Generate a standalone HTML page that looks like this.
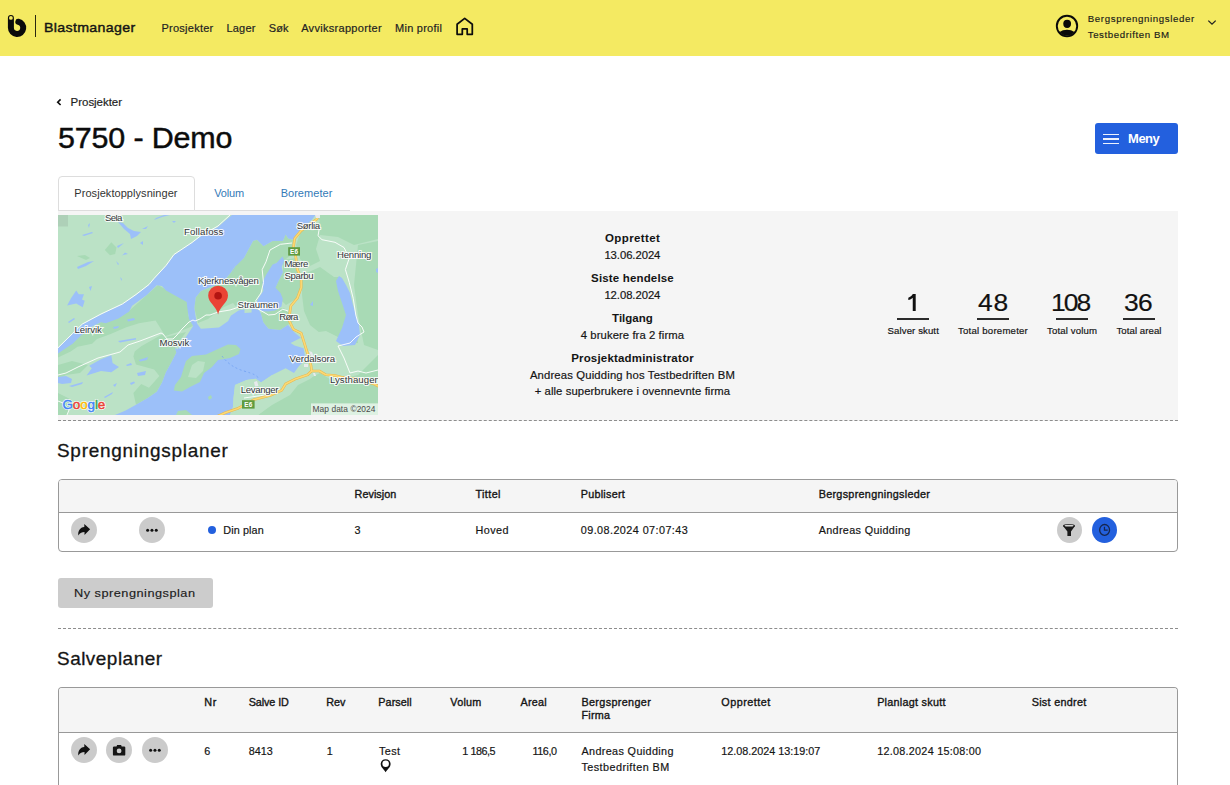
<!DOCTYPE html>
<html lang="no">
<head>
<meta charset="utf-8">
<title>Blastmanager - 5750 - Demo</title>
<style>
*{box-sizing:border-box;margin:0;padding:0}
html,body{width:1230px;height:785px;overflow:hidden;background:#fff}
body{font-family:"Liberation Sans",sans-serif;color:#1c1c1c;position:relative}
.abs,.t,svg.i{position:absolute}
.t{white-space:pre;line-height:1;display:block}
header{position:absolute;left:0;top:0;width:1230px;height:56px;background:#f4ea62}
.divider{left:34.7px;top:15px;width:1.4px;height:22px;background:#2a2810}
.menybtn{left:1095px;top:123px;width:83px;height:31px;background:#2360de;border-radius:3px}
.menybtn i{position:absolute;left:8px;width:16px;height:1.4px;background:#fff;opacity:.92}
.tabline{left:58px;top:210px;width:292px;height:1px;background:#ddd}
.tabactive{left:58px;top:176px;width:137px;height:35px;background:#fff;border:1px solid #ddd;border-radius:4px 4px 0 0}
.panel{left:58px;top:211px;width:1120px;height:210px;background:#f5f5f5}
.dash{left:58px;width:1120px;height:0;border-top:1px dashed #8d8d8d}
.uline{top:318px;width:32px;height:2px;background:#2b2b2b}
.tbl{left:58px;width:1120px;border:1px solid #999;border-radius:4px;background:#fff;overflow:hidden}
.tbl .th{position:absolute;left:0;top:0;width:100%;background:#f5f5f5;border-bottom:1px solid #999}
.cb{width:26px;height:26px;border-radius:50%;background:#cbcbcb}
.cb.blue{background:#2360de}
.cb svg{position:absolute;left:0;top:0;width:26px;height:26px}
.btn{left:58px;top:578px;width:155px;height:30px;background:#cccccc;border-radius:3px}
.maptext{left:58px;top:215px;width:320px;height:200px;overflow:hidden}
.t b{font-weight:400}
.dot{left:207.5px;top:526px;width:8px;height:8px;border-radius:50%;background:#2360de}
</style>
</head>
<body>
<header>
  <!-- logo -->
  <svg class="i" style="left:0;top:0" width="60" height="56" viewBox="0 0 60 56">
    <path d="M10.9 18 V27.8 A6.15 6.15 0 1 0 18.3 21.77" fill="none" stroke="#0b0b0b" stroke-width="6" stroke-linecap="round"/>
    <circle cx="10.9" cy="17.9" r="1.9" fill="#f4ea62"/>
  </svg>
  <div class="abs divider"></div>
  <!-- home icon -->
  <svg class="i" style="left:452px;top:12px" width="26" height="28" viewBox="452 12 26 28">
    <path d="M462.3 34.300 H457.100 V24.300 L464.700 18.400 L472.300 24.300 V34.300 H467.200 V28.900 H462.300 Z" fill="none" stroke="#0d0d0d" stroke-width="1.750" stroke-linejoin="round"/>
  </svg>
  <!-- user icon -->
  <svg class="i" style="left:1054px;top:13px" width="26" height="26" viewBox="1054 13 26 26">
    <defs><clipPath id="uc"><circle cx="1067" cy="26" r="9.6"/></clipPath></defs>
    <circle cx="1067" cy="26" r="10.2" fill="none" stroke="#0a0a0a" stroke-width="1.9"/>
    <ellipse cx="1067.15" cy="23.85" rx="3.9" ry="4.15" fill="#0a0a0a"/>
    <ellipse cx="1067" cy="37.4" rx="10.5" ry="7.6" fill="#0a0a0a" clip-path="url(#uc)"/>
  </svg>
  <!-- chevron -->
  <svg class="i" style="left:1204px;top:16px" width="16" height="14" viewBox="1204 16 16 14">
    <path d="M1208.3 20.6 L1212 24.2 L1215.7 20.6" fill="none" stroke="#222" stroke-width="1.3"/>
  </svg>
</header>

<!-- breadcrumb chevron -->
<svg class="i" style="left:54px;top:96px" width="10" height="12" viewBox="54 96 10 12">
  <path d="M60.6 99.4 L57.7 102.2 L60.6 105" fill="none" stroke="#111" stroke-width="1.6"/>
</svg>

<div class="abs menybtn"><i style="top:11px;height:1px"></i><i style="top:15.4px;height:1.3px"></i><i style="top:20.1px;height:1.2px"></i></div>

<div class="abs panel"></div>
<div class="abs tabline"></div>
<div class="abs tabactive"></div>

<svg class="i" style="left:58px;top:215px" width="320" height="200" viewBox="0 0 320 200">
<defs><clipPath id="mc"><rect width="320" height="200"/></clipPath></defs>
<g clip-path="url(#mc)">
<rect width="320" height="200" fill="#bbe2c6"/>
<!-- mid-green land patches -->
<g fill="#a8dab5">
  <path d="M0 0H10V11.500H0Z" fill="#aed0b8"/>
  <path d="M46.8 35L53.3 27.3L58.5 32.5L57.2 39L52 40.3Z"/>
  <path d="M19 41L27 40L32 43L28 45Z"/>
  <!-- band SE of Leirvik arm -->
  <path d="M88.8 80L100 70L130 87L130 100L135 111L120 117L107.3 121L97.6 105.4L81 108.3L68.3 112.2L52.7 119L39 123.9L34.1 128.8L19.5 131.7L12.7 136.6L0 142.4V138L22 121L43 107L60 103L71 96Z"/>
  <!-- Mosvik lower -->
  <path d="M76.7 136.4L83.2 131.2L104 119.5L108 122L128 117L117 132.5L118.3 137.7L113 148L108 157L104 167.6L98.800 176.7L89.700 183L78 189.700L75.400 178L83.200 169L91 172.800L101.400 161L96.200 154.600L78 149.400L75.400 141.600Z"/>
  <path d="M0 150L14 146L30 150L22 158L8 160L0 165Z"/>
  <path d="M0 178L12 184L10 200H0Z"/>
  <!-- pin peninsula + north -->
  <path d="M178 50L186 42.9L195.100 26L199 24.700L205.500 31.200L214.600 26L225 26L227.600 19.500L230.200 23.400L235 25L233 40L228 44L218 48L208 62L204 76L199 86L190 92L181 95L175 88L166 92L150 104L140 108L136.400 92.900L137.700 82.500L142.900 76L165 66.900L172.800 57.800Z"/>
  <!-- top right -->
  <path d="M257.5 0H320V24L296 30L280 22L262 20L258 12L262 6Z"/>
  <path d="M243 16L256 8L262 20L258 34L262 46L250 52L242 44L238 30Z"/>
  <!-- east of E6 -->
  <path d="M244 60L262 52L276 62L282 62L290 80L296 100L300 128L270 130L262 118L252 110L246 96L244 80Z"/>
  <path d="M300 30L320 26V135L306 130L300 100L296 70Z"/>
  <!-- Røra blob -->
  <path d="M202.700 98.100L210 95L226 93L232 100L236 106L230 109.800L222.200 115L210.500 113.700L205.300 107.200Z"/>
  <path d="M225 45L238 43L242 62L243 74L238 84L228 90L222 84L217 73L221 65L225 57Z"/>
  <!-- bottom right -->
  <path d="M320 140V200H200L215 188L226 178L232 170L250 164L262 158L275 166L300 160Z"/>
  <path d="M162 200L176 196L196 187L212 183L224 176L230 166L250 160L254 150L262 156L252 164L240 170L232 180L214 190L200 200Z" fill="#bbe2c6"/>
  <path d="M254 118L268 116L280 122L296 132L290 150L278 158L262 156L254 150L250 139Z" fill="#bbe2c6"/>
</g>
<!-- water -->
<g fill="#9cc0f9">
  <!-- NW arm -->
  <path d="M174 0L168 5L160 12L143 21L134 28L116 40L108 51L96 64L91 70L78 80L64.400 89.300L43 99.500L24.400 109.300L14.600 119L0 133.200V138.500L5.900 134.600L14.600 128.800L22.400 121L35 111L43 107.300L47.800 108.300L60.500 103.400L71.200 96.600L74.100 90.700L88.800 80L98.800 70.200L104 70.900L108 75.400L117 80.600L128.700 87.100L129.400 93.600L131 104L134 109L135.100 111.100L128 122L119.500 134.500L117 132.500L118.300 137.700L113 148L108 157L104 167.600L98.800 176.700L89.700 183L78 189.700L67.600 195.600L57 200H172L175 192L175.5 183L177 170L188.6 165L197.7 163.7L203 167.6L214.6 159.8L227.6 153.3L236 158L241 151L246 146L247 141L245.600 133.200L236.500 130.600L232.600 128L243 122.800L236.500 117.600L230 109.800L222.200 115L210.500 113.700L205.300 107.200L202.700 98.100L200.800 94.900L193.600 93L193.600 97.500L186.500 98L186.500 94.200L180.600 95.500L172.800 100.700L170.200 106L161 112.400L142.900 113.700L139 108.500L137.700 102L136.400 92.900L137.700 82.500L142.900 76L165 66.900L172.800 57.800L178 50L173 62.400L176.900 52L186 42.900L195.100 26L199 24.700L205.500 31.200L214.600 26L225 26L227.600 19.500L230.200 23.400L235.400 24.700L238 19.500L243.200 14.300L253.600 5.200L257.500 0Z"/>
  <!-- Borgenfjorden -->
  <path d="M224.500 41.600L226.300 45.500L223.700 52L225 57.200L221 65L217.500 72.800L222.500 78L224.800 83.800L223.500 91.500L217 95.500L210 96.500L203 96L200.800 94.900L198.800 87.700L200 83.800L205.300 76L204.500 66.900L208 60L214.600 49.400L218.500 48Z"/>
  <!-- Leksdalsvatnet -->
  <path d="M281 61L284 63L288 70L292 78L295 90L298 100L301 110L302 120L297 130L285 131L278 126L284 113L288 100L284 88L280 76L278 66Z"/>
  <!-- lakes TL -->
  <path d="M18.200 75.400L20.800 79.300L26 79.300L24 84.500L26.700 85.800L24.700 92.300L18.200 88.400L9.100 90.400L13 83.200Z"/>
  <path d="M60 7L65 8L70 13L76 16L83 17L79 21L73 24L72 19L66 14Z"/>
  <path d="M96 5L104 2L112 0H106L98 3Z"/>
  <path d="M19 52L30 47L36 46L28 51L20 54Z"/>
  <path d="M24 20L34 17L35 18L26 21Z"/>
  <path d="M59 31L66 28L60 33Z"/><path d="M63.500 41L67 37.500L70 39L65 40Z"/><path d="M82 28L85 26L85 30Z"/>
  <path d="M30 10L32 8L31 13Z"/><path d="M58 46L61 49L60 50Z"/><path d="M62 62L64 64L63.500 66Z"/><path d="M31 72L34 71L32.500 76Z"/>
  <path d="M84 14L90 11L88 14Z"/><path d="M114 6L118 6L116 8Z"/>
  <!-- lakes BL -->
  <path d="M53.300 140.300L54.600 148L61 152L53.300 157.200L43 156L28.600 160.500L33.800 153.300L31.200 150.700L43 144.200Z"/>
  <path d="M0 162L8 161L14 164L13 168L4 169L0 168Z"/>
  <path d="M11 171L25 167L24 169L14 172Z"/>
  <path d="M10 107L16 103L17 104L11 108Z"/><path d="M69 104.500L76 103L77 105L70 106.500Z"/><path d="M55 112L61 111L60 113L56 114Z"/>
  <path d="M81 145L90 142L89 145L82 146.500Z"/><path d="M79 158L88 156L87 160L80 161Z"/><path d="M68 150L73 148L74 150L69 151Z"/>
  <path d="M60 126L78 123L78 124.500L62 127.500Z"/><path d="M55 170L59 168L57 172Z"/><path d="M46 182L55 177L54 179L47 183Z"/><path d="M72 168L76 166.500L77 168L73 170Z"/>
  <!-- right lakes -->
  <path d="M318 54L320 53V58L318 57Z"/><path d="M252 90L255 86L255 91Z"/>
</g>
<!-- islands in water -->
<g fill="#a8dab5">
  <path d="M115.800 175.500L117 170L123 162L126 152L128 146L134 141L148 139.500L160 134L170 129.500L178 130L182.500 134L181 139L172 143L160 145L154 152L146 158L142 167L132 172L124 176.500Z"/>
  <path d="M130 162L134 150L140 146L147 147L145 156L138 163Z" fill="#bbe2c6"/>
  <path d="M150 182L153 180L154 183L151 185Z"/>
  <path d="M120 196L128 195L134 200H118Z"/>
  <path d="M172 200L175 192L175.5 183L177 170L188.6 165L197.7 163.7L203 167.6L214 160L222 162L212 172L205 180L196 184L184 190L176 200Z" fill="#bbe2c6"/>
</g>
<!-- ferry dashed -->
<path d="M164 141Q172 152 186 156T200 163" fill="none" stroke="#6f9ff2" stroke-width=".8" stroke-dasharray="2 2.500"/>
<!-- white roads -->
<g fill="none" stroke="#fff" stroke-width="1" stroke-opacity=".9" stroke-linejoin="round">
  <path d="M172 0L160 11L143 20.500L134 27.500L116 39.500L108 50.500L96 63.500L91 69.500L78 79.500L64.400 89L43 99L24.400 109L14.600 118.500L0 132.800"/>
  <path d="M0 160L8 158L20 152L40 143L62 137L70 130L82 126L103 118L105 119L109 124L115 124L119 120L124 114L131 107L135 105L137 106L142 104L148 100L152 100L160 97L172 95L178 93L184 91L197 92L201 94.500L210.500 100L217 99.400L224.800 94.200L230 96"/>
  <path d="M201.600 95L197.700 85.800L203 78L205.500 67.600L204.200 54.600L208 46.800L212 35L222.400 29.300L234 28"/>
  <path d="M261.400 13L260 20.800L264 24.700L277 27.300L286 32.500L291.300 43L287.400 54.600L291.300 67.600L295.200 83.200L297.800 100L300 108L304 112L306 117L298 122L292 128L280 131L286 143L292 158L300 156L308 158L320 155"/>
  <path d="M0 186L5 188L11 195L9 200"/>
  <path d="M186 183L200 181L214 179"/>
</g>
<!-- E6 -->
<g fill="none" stroke-linejoin="round" stroke-linecap="round">
  <path id="e6" d="M260 0L259 4L243.200 15.600L236.700 23.400L235.400 32.500L238 43L239.300 54.600L243.200 62.400L243.200 72.800L239.300 83.200L232.800 91L231.500 100L231 105.200L235.400 114.300L243.200 118.200L246.500 128.600L249.700 139L253 150.700L253.600 156L249.700 159.800L238 163.700L227.600 169L223.700 175.400L212 180.600L196.400 184.500L179.500 193.600L167.800 197.500L160 201" stroke="#e9b94e" stroke-width="2.600"/>
  <path d="M253.600 156L261.400 156L268 159.800L277 160.500L284.800 162.400L300 164L316 169L322 172" stroke="#e9b94e" stroke-width="2.600"/>
  <path d="M260 0L259 4L243.200 15.600L236.700 23.400L235.400 32.500L238 43L239.300 54.600L243.200 62.400L243.200 72.800L239.300 83.200L232.800 91L231.500 100L231 105.200L235.400 114.300L243.200 118.200L246.500 128.600L249.700 139L253 150.700L253.600 156L249.700 159.800L238 163.700L227.600 169L223.700 175.400L212 180.600L196.400 184.500L179.500 193.600L167.800 197.500L160 201" stroke="#fbd976" stroke-width="1.500"/>
  <path d="M253.600 156L261.400 156L268 159.800L277 160.500L284.800 162.400L300 164L316 169L322 172" stroke="#fbd976" stroke-width="1.500"/>
</g>
<!-- E6 shields -->
<g font-family="Liberation Sans, sans-serif" font-weight="700" font-size="6.500" fill="#fff" text-anchor="middle">
  <rect x="230.200" y="32.200" width="11.800" height="8.400" fill="#5f9b3f"/><text x="236.100" y="38.800">E6</text>
  <rect x="184" y="185.200" width="12.600" height="8.400" fill="#5f9b3f"/><text x="190.300" y="191.800">E6</text>
</g>
<!-- urban specks -->
<g fill="#e8eaed"><path d="M251 136L254 137L256 142L253 141Z"/><path d="M246 149L250 149L250 152L246 152Z"/><path d="M255 158L257 158L258 161L256 161Z"/><path d="M257 0H262V3H258Z"/><path d="M196 167L199 166L200.500 171L197 171.500Z"/></g>
<!--LABELS-->
<!-- Map data box -->
<rect x="253" y="188.400" width="67" height="11.600" fill="#fff" fill-opacity=".62"/>
</g>
</svg>

<div class="abs maptext"><span class="t h" aria-hidden="true" style="left:46.92px;top:-2.00px;font-size:9.6px;color:#33373a;letter-spacing:-0.568px;-webkit-text-stroke:2.2px rgba(255,255,255,.85);color:transparent">Sela</span>
<span class="t" style="left:46.92px;top:-2.00px;font-size:9.6px;color:#33373a;letter-spacing:-0.568px;">Sela</span>
<span class="t h" aria-hidden="true" style="left:126.12px;top:12.00px;font-size:9.6px;color:#33373a;letter-spacing:0.101px;-webkit-text-stroke:2.2px rgba(255,255,255,.85);color:transparent">Follafoss</span>
<span class="t" style="left:126.12px;top:12.00px;font-size:9.6px;color:#33373a;letter-spacing:0.101px;">Follafoss</span>
<span class="t h" aria-hidden="true" style="left:238.72px;top:6.00px;font-size:9.6px;color:#33373a;letter-spacing:-0.333px;-webkit-text-stroke:2.2px rgba(255,255,255,.85);color:transparent">Sørlia</span>
<span class="t" style="left:238.72px;top:6.00px;font-size:9.6px;color:#33373a;letter-spacing:-0.333px;">Sørlia</span>
<span class="t h" aria-hidden="true" style="left:279.02px;top:35.00px;font-size:9.6px;color:#33373a;letter-spacing:-0.225px;-webkit-text-stroke:2.2px rgba(255,255,255,.85);color:transparent">Henning</span>
<span class="t" style="left:279.02px;top:35.00px;font-size:9.6px;color:#33373a;letter-spacing:-0.225px;">Henning</span>
<span class="t h" aria-hidden="true" style="left:226.42px;top:44.00px;font-size:9.6px;color:#33373a;letter-spacing:-0.354px;-webkit-text-stroke:2.2px rgba(255,255,255,.85);color:transparent">Mære</span>
<span class="t" style="left:226.42px;top:44.00px;font-size:9.6px;color:#33373a;letter-spacing:-0.354px;">Mære</span>
<span class="t h" aria-hidden="true" style="left:226.42px;top:56.00px;font-size:9.6px;color:#33373a;letter-spacing:-0.348px;-webkit-text-stroke:2.2px rgba(255,255,255,.85);color:transparent">Sparbu</span>
<span class="t" style="left:226.42px;top:56.00px;font-size:9.6px;color:#33373a;letter-spacing:-0.348px;">Sparbu</span>
<span class="t h" aria-hidden="true" style="left:140.02px;top:61.00px;font-size:9.6px;color:#33373a;letter-spacing:-0.222px;-webkit-text-stroke:2.2px rgba(255,255,255,.85);color:transparent">Kjerknesvågen</span>
<span class="t" style="left:140.02px;top:61.00px;font-size:9.6px;color:#33373a;letter-spacing:-0.222px;">Kjerknesvågen</span>
<span class="t h" aria-hidden="true" style="left:179.62px;top:85.00px;font-size:9.6px;color:#33373a;letter-spacing:-0.113px;-webkit-text-stroke:2.2px rgba(255,255,255,.85);color:transparent">Straumen</span>
<span class="t" style="left:179.62px;top:85.00px;font-size:9.6px;color:#33373a;letter-spacing:-0.113px;">Straumen</span>
<span class="t h" aria-hidden="true" style="left:221.22px;top:97.00px;font-size:9.6px;color:#33373a;letter-spacing:-0.709px;-webkit-text-stroke:2.2px rgba(255,255,255,.85);color:transparent">Røra</span>
<span class="t" style="left:221.22px;top:97.00px;font-size:9.6px;color:#33373a;letter-spacing:-0.709px;">Røra</span>
<span class="t h" aria-hidden="true" style="left:16.42px;top:110.00px;font-size:9.6px;color:#33373a;letter-spacing:-0.056px;-webkit-text-stroke:2.2px rgba(255,255,255,.85);color:transparent">Leirvik</span>
<span class="t" style="left:16.42px;top:110.00px;font-size:9.6px;color:#33373a;letter-spacing:-0.056px;">Leirvik</span>
<span class="t h" aria-hidden="true" style="left:101.42px;top:123.00px;font-size:9.6px;color:#33373a;letter-spacing:0.008px;-webkit-text-stroke:2.2px rgba(255,255,255,.85);color:transparent">Mosvik</span>
<span class="t" style="left:101.42px;top:123.00px;font-size:9.6px;color:#33373a;letter-spacing:0.008px;">Mosvik</span>
<span class="t h" aria-hidden="true" style="left:231.62px;top:139.00px;font-size:9.6px;color:#33373a;letter-spacing:-0.042px;-webkit-text-stroke:2.2px rgba(255,255,255,.85);color:transparent">Verdalsora</span>
<span class="t" style="left:231.62px;top:139.00px;font-size:9.6px;color:#33373a;letter-spacing:-0.042px;">Verdalsora</span>
<span class="t h" aria-hidden="true" style="left:271.92px;top:160.00px;font-size:9.6px;color:#33373a;letter-spacing:0.082px;-webkit-text-stroke:2.2px rgba(255,255,255,.85);color:transparent">Lysthaugen</span>
<span class="t" style="left:271.92px;top:160.00px;font-size:9.6px;color:#33373a;letter-spacing:0.082px;">Lysthaugen</span>
<span class="t h" aria-hidden="true" style="left:182.82px;top:170.00px;font-size:9.6px;color:#33373a;letter-spacing:-0.331px;-webkit-text-stroke:2.2px rgba(255,255,255,.85);color:transparent">Levanger</span>
<span class="t" style="left:182.82px;top:170.00px;font-size:9.6px;color:#33373a;letter-spacing:-0.331px;">Levanger</span>
<span class="t" style="left:254.50px;top:190.00px;font-size:8.4px;color:#4a4a4a;letter-spacing:0.072px;">Map data ©2024</span>
<span class="t h" aria-hidden="true" style="left:4.40px;top:183.00px;font-size:13.4px;color:#4285f4;letter-spacing:-0.058px;-webkit-text-stroke:0.45px;-webkit-text-stroke:1.8px rgba(255,255,255,.85);color:transparent"><b style="color:#4285f4">G</b><b style="color:#ea4335">o</b><b style="color:#fbbc05">o</b><b style="color:#4285f4">g</b><b style="color:#34a853">l</b><b style="color:#ea4335">e</b></span>
<span class="t" style="left:4.40px;top:183.00px;font-size:13.4px;color:#4285f4;letter-spacing:-0.058px;-webkit-text-stroke:0.45px;"><b style="color:#4285f4">G</b><b style="color:#ea4335">o</b><b style="color:#fbbc05">o</b><b style="color:#4285f4">g</b><b style="color:#34a853">l</b><b style="color:#ea4335">e</b></span></div>
<svg class="i" style="left:58px;top:215px" width="320" height="200" viewBox="0 0 320 200">
<path d="M160.100 99.600C158.500 91 150.200 88 150.200 80.600A9.900 9.900 0 0 1 170 80.600C170 88 161.700 91 160.100 99.600Z" fill="#ea4335"/>
<circle cx="160.100" cy="80.700" r="3.800" fill="#b31412"/>
</svg>

<svg class="i" role="img" aria-label="1" style="left:904px;top:290px" width="16" height="24" viewBox="904 290 16 24"><path d="M912.8 294 H915.7 V311 H912.75 V297.7 C911.7 298.8 910 299.7 908.300 300.100 V297.700 C910.200 297.100 911.900 295.800 912.800 294 Z" fill="#111"/></svg>
<div class="abs uline" style="left:897px"></div>
<div class="abs uline" style="left:977px"></div>
<div class="abs uline" style="left:1056px"></div>
<div class="abs uline" style="left:1123px"></div>

<div class="abs dash" style="top:420px"></div>

<!-- Sprengningsplaner table -->
<div class="abs tbl" style="top:479px;height:73px"><div class="th" style="height:33px"></div></div>
<div class="abs cb" style="left:71px;top:517px"><svg viewBox="0 0 26 26"><path fill="#111" d="M13.3 6.9 L19.1 12.3 L13.5 17.9 V14.9 C11 14.9 9 15.6 7.3 18.4 C6.8 14 9 10.3 13.3 10 Z"/></svg></div>
<div class="abs cb" style="left:139px;top:517px"><svg viewBox="0 0 26 26"><circle cx="8.65" cy="13.15" r="1.5" fill="#111"/><circle cx="12.95" cy="13.15" r="1.5" fill="#111"/><circle cx="17.25" cy="13.15" r="1.5" fill="#111"/></svg></div>
<div class="abs dot"></div>
<div class="abs cb" style="left:1057px;top:517px;width:25px"><svg viewBox="0 0 26 26"><path d="M6.05 9.1 L10.4 14.6 V18.9 H14 V14.6 L17.95 9.1 Z" fill="#1a1a1a"/><ellipse cx="12" cy="8.8" rx="6" ry="1.9" fill="#1a1a1a"/><ellipse cx="12.05" cy="8.7" rx="4.5" ry="0.85" fill="#d4d4d4"/></svg></div>
<div class="abs cb blue" style="left:1092px;top:517px;width:25px"><svg viewBox="0 0 26 26"><ellipse cx="12.6" cy="12.9" rx="4.95" ry="5.4" fill="none" stroke="#16264f" stroke-width="1.3"/><path d="M12.45 9.7 V13.1 H15.7" fill="none" stroke="#16264f" stroke-width="1.25"/></svg></div>

<div class="abs btn"></div>
<div class="abs dash" style="top:628px"></div>

<!-- Salveplaner table -->
<div class="abs tbl" style="top:687px;height:110px;border-bottom:0;border-radius:4px 4px 0 0"><div class="th" style="height:45px"></div></div>
<div class="abs cb" style="left:71px;top:737px"><svg viewBox="0 0 26 26"><path fill="#111" d="M13.3 6.9 L19.1 12.3 L13.5 17.9 V14.9 C11 14.9 9 15.6 7.3 18.4 C6.8 14 9 10.3 13.3 10 Z"/></svg></div>
<div class="abs cb" style="left:106px;top:737px"><svg viewBox="0 0 26 26"><path fill="#151515" fill-rule="evenodd" d="M8.1 9.4 H10.5 L11.1 8 H15.1 L15.7 9.4 H18.100 A1.200 1.200 0 0 1 19.300 10.600 V17.400 A1.200 1.200 0 0 1 18.100 18.600 H8.100 A1.200 1.200 0 0 1 6.900 17.400 V10.600 A1.200 1.200 0 0 1 8.100 9.400 Z M13.100 11.500 A2.400 2.400 0 1 0 13.100 16.300 A2.400 2.400 0 1 0 13.100 11.500 Z"/></svg></div>
<div class="abs cb" style="left:141.5px;top:737px"><svg viewBox="0 0 26 26"><circle cx="8.65" cy="13.15" r="1.5" fill="#111"/><circle cx="12.95" cy="13.15" r="1.5" fill="#111"/><circle cx="17.25" cy="13.15" r="1.5" fill="#111"/></svg></div>
<!-- parsell pin -->
<svg class="i" style="left:378px;top:758px" width="14" height="16" viewBox="378 758 14 16">
  <path d="M385.65 772.3 C383.6 769.2 380.7 767.2 380.7 764.1 A4.95 4.95 0 0 1 390.6 764.1 C390.6 767.2 387.7 769.2 385.65 772.3 Z" fill="#111"/>
  <circle cx="385.65" cy="763.7" r="3.25" fill="#fff"/>
</svg>

<span class="t" style="left:43.75px;top:21.00px;font-size:13.5px;color:#151515;letter-spacing:0.324px;-webkit-text-stroke:0.42px;transform:scaleX(1.05);transform-origin:0 0;">Blastmanager</span>
<span class="t" style="left:161.44px;top:23.00px;font-size:11px;color:#222;letter-spacing:0.252px;-webkit-text-stroke:0.18px;">Prosjekter</span>
<span class="t" style="left:226.44px;top:23.00px;font-size:11px;color:#222;letter-spacing:0.215px;-webkit-text-stroke:0.18px;">Lager</span>
<span class="t" style="left:268.64px;top:23.00px;font-size:11px;color:#222;letter-spacing:0.219px;-webkit-text-stroke:0.18px;">Søk</span>
<span class="t" style="left:301.14px;top:23.00px;font-size:11px;color:#222;letter-spacing:0.306px;-webkit-text-stroke:0.18px;">Avviksrapporter</span>
<span class="t" style="left:395.04px;top:23.00px;font-size:11px;color:#222;letter-spacing:0.253px;-webkit-text-stroke:0.18px;">Min profil</span>
<span class="t" style="left:1087.72px;top:14.00px;font-size:9.7px;color:#1a1a1a;letter-spacing:0.621px;-webkit-text-stroke:0.15px;">Bergsprengningsleder</span>
<span class="t" style="left:1087.72px;top:30.00px;font-size:9.7px;color:#1a1a1a;letter-spacing:0.58px;-webkit-text-stroke:0.15px;">Testbedriften BM</span>
<span class="t" style="left:70.61px;top:97.00px;font-size:11.5px;color:#222;letter-spacing:-0.042px;-webkit-text-stroke:0.18px;">Prosjekter</span>
<span class="t" style="left:57.57px;top:124.00px;font-size:29px;color:#0c0c0c;letter-spacing:-0.156px;-webkit-text-stroke:0.45px;transform:scaleX(1.05);transform-origin:0 0;">5750 - Demo</span>
<span class="t" style="left:1128.12px;top:132.00px;font-size:13px;color:#fff;font-weight:700;letter-spacing:-0.545px;">Meny</span>
<span class="t" style="left:74.34px;top:188.00px;font-size:11px;color:#333;letter-spacing:0.057px;">Prosjektopplysninger</span>
<span class="t" style="left:214.14px;top:188.00px;font-size:11px;color:#337ab7;letter-spacing:-0.145px;">Volum</span>
<span class="t" style="left:280.64px;top:188.00px;font-size:11px;color:#337ab7;letter-spacing:0.043px;">Boremeter</span>
<span class="t" style="left:605.00px;top:233.00px;font-size:11.5px;color:#141414;font-weight:700;letter-spacing:0.381px;">Opprettet</span>
<span class="t" style="left:604.40px;top:250.00px;font-size:11.3px;color:#141414;letter-spacing:-0.061px;-webkit-text-stroke:0.18px;">13.06.2024</span>
<span class="t" style="left:591.10px;top:273.00px;font-size:11.5px;color:#141414;font-weight:700;letter-spacing:0.158px;">Siste hendelse</span>
<span class="t" style="left:604.40px;top:290.00px;font-size:11.3px;color:#141414;letter-spacing:-0.061px;-webkit-text-stroke:0.18px;">12.08.2024</span>
<span class="t" style="left:612.10px;top:313.00px;font-size:11.5px;color:#141414;font-weight:700;letter-spacing:-0.015px;">Tilgang</span>
<span class="t" style="left:580.80px;top:330.00px;font-size:11.3px;color:#141414;letter-spacing:0.074px;-webkit-text-stroke:0.18px;">4 brukere fra 2 firma</span>
<span class="t" style="left:571.15px;top:353.00px;font-size:11.5px;color:#141414;font-weight:700;letter-spacing:0.181px;">Prosjektadministrator</span>
<span class="t" style="left:529.90px;top:370.00px;font-size:11.3px;color:#141414;letter-spacing:0.153px;-webkit-text-stroke:0.18px;">Andreas Quidding hos Testbedriften BM</span>
<span class="t" style="left:534.70px;top:386.00px;font-size:11.3px;color:#141414;letter-spacing:0.079px;-webkit-text-stroke:0.18px;">+ alle superbrukere i ovennevnte firma</span>
<span class="t" style="left:977.66px;top:291.00px;font-size:24px;color:#111;letter-spacing:0.833px;-webkit-text-stroke:0.18px;transform:scaleX(1.1);transform-origin:0 0;">48</span>
<span class="t" style="left:1051.11px;top:291.00px;font-size:24px;color:#111;letter-spacing:-1.76px;-webkit-text-stroke:0.18px;transform:scaleX(1.1);transform-origin:0 0;">108</span>
<span class="t" style="left:1124.20px;top:291.00px;font-size:24px;color:#111;letter-spacing:-0.53px;-webkit-text-stroke:0.18px;transform:scaleX(1.1);transform-origin:0 0;">36</span>
<span class="t" style="left:887.60px;top:326.00px;font-size:9.6px;color:#141414;letter-spacing:0.098px;-webkit-text-stroke:0.18px;">Salver skutt</span>
<span class="t" style="left:958.00px;top:326.00px;font-size:9.6px;color:#141414;letter-spacing:0.225px;-webkit-text-stroke:0.18px;">Total boremeter</span>
<span class="t" style="left:1047.00px;top:326.00px;font-size:9.6px;color:#141414;letter-spacing:0.147px;-webkit-text-stroke:0.18px;">Total volum</span>
<span class="t" style="left:1116.50px;top:326.00px;font-size:9.6px;color:#141414;letter-spacing:0.073px;-webkit-text-stroke:0.18px;">Total areal</span>
<span class="t" style="left:57.16px;top:442.00px;font-size:18.2px;color:#151515;letter-spacing:0.721px;-webkit-text-stroke:0.3px;transform:scaleX(1.04);transform-origin:0 0;">Sprengningsplaner</span>
<span class="t" style="left:354.55px;top:489.00px;font-size:10.8px;color:#141414;letter-spacing:0.056px;-webkit-text-stroke:0.35px;">Revisjon</span>
<span class="t" style="left:475.45px;top:489.00px;font-size:10.8px;color:#141414;letter-spacing:0.4px;-webkit-text-stroke:0.35px;">Tittel</span>
<span class="t" style="left:580.75px;top:489.00px;font-size:10.8px;color:#141414;letter-spacing:0.248px;-webkit-text-stroke:0.35px;">Publisert</span>
<span class="t" style="left:818.65px;top:489.00px;font-size:10.8px;color:#141414;letter-spacing:0.298px;-webkit-text-stroke:0.35px;">Bergsprengningsleder</span>
<span class="t" style="left:223.35px;top:525.00px;font-size:10.8px;color:#141414;letter-spacing:0.111px;-webkit-text-stroke:0.18px;">Din plan</span>
<span class="t" style="left:354.55px;top:525.00px;font-size:10.8px;color:#141414;-webkit-text-stroke:0.18px;">3</span>
<span class="t" style="left:475.45px;top:525.00px;font-size:10.8px;color:#141414;letter-spacing:0.445px;-webkit-text-stroke:0.18px;">Hoved</span>
<span class="t" style="left:580.75px;top:525.00px;font-size:10.8px;color:#141414;letter-spacing:0.44px;-webkit-text-stroke:0.18px;">09.08.2024 07:07:43</span>
<span class="t" style="left:818.65px;top:525.00px;font-size:10.8px;color:#141414;letter-spacing:0.351px;-webkit-text-stroke:0.18px;">Andreas Quidding</span>
<span class="t" style="left:74.33px;top:587.00px;font-size:11.6px;color:#1c1c1c;letter-spacing:0.442px;-webkit-text-stroke:0.15px;transform:scaleX(1.1);transform-origin:0 0;">Ny sprengningsplan</span>
<span class="t" style="left:57.16px;top:650.00px;font-size:18.2px;color:#151515;letter-spacing:0.49px;-webkit-text-stroke:0.3px;transform:scaleX(1.04);transform-origin:0 0;">Salveplaner</span>
<span class="t" style="left:204.15px;top:697.00px;font-size:10.8px;color:#141414;letter-spacing:0.694px;-webkit-text-stroke:0.35px;">Nr</span>
<span class="t" style="left:248.65px;top:697.00px;font-size:10.8px;color:#141414;letter-spacing:-0.087px;-webkit-text-stroke:0.35px;">Salve ID</span>
<span class="t" style="left:326.25px;top:697.00px;font-size:10.8px;color:#141414;letter-spacing:-0.052px;-webkit-text-stroke:0.35px;">Rev</span>
<span class="t" style="left:378.35px;top:697.00px;font-size:10.8px;color:#141414;letter-spacing:0.064px;-webkit-text-stroke:0.35px;">Parsell</span>
<span class="t" style="left:450.35px;top:697.00px;font-size:10.8px;color:#141414;letter-spacing:0.246px;-webkit-text-stroke:0.35px;">Volum</span>
<span class="t" style="left:520.55px;top:697.00px;font-size:10.8px;color:#141414;letter-spacing:0.245px;-webkit-text-stroke:0.35px;">Areal</span>
<span class="t" style="left:581.45px;top:697.00px;font-size:10.8px;color:#141414;letter-spacing:0.353px;-webkit-text-stroke:0.35px;">Bergsprenger</span>
<span class="t" style="left:581.45px;top:710.00px;font-size:10.8px;color:#141414;letter-spacing:0.252px;-webkit-text-stroke:0.35px;">Firma</span>
<span class="t" style="left:721.35px;top:697.00px;font-size:10.8px;color:#141414;letter-spacing:0.473px;-webkit-text-stroke:0.35px;">Opprettet</span>
<span class="t" style="left:877.15px;top:697.00px;font-size:10.8px;color:#141414;letter-spacing:0.267px;-webkit-text-stroke:0.35px;">Planlagt skutt</span>
<span class="t" style="left:1031.65px;top:697.00px;font-size:10.8px;color:#141414;letter-spacing:0.298px;-webkit-text-stroke:0.35px;">Sist endret</span>
<span class="t" style="left:204.15px;top:746.00px;font-size:10.8px;color:#141414;-webkit-text-stroke:0.18px;">6</span>
<span class="t" style="left:248.65px;top:746.00px;font-size:10.8px;color:#141414;letter-spacing:0.023px;-webkit-text-stroke:0.18px;">8413</span>
<span class="t" style="left:326.85px;top:746.00px;font-size:10.8px;color:#141414;-webkit-text-stroke:0.18px;">1</span>
<span class="t" style="left:378.95px;top:746.00px;font-size:10.8px;color:#141414;letter-spacing:0.396px;-webkit-text-stroke:0.18px;">Test</span>
<span class="t" style="left:462.33px;top:746.00px;font-size:10.8px;color:#141414;letter-spacing:-0.455px;-webkit-text-stroke:0.18px;">1 186,5</span>
<span class="t" style="left:532.43px;top:746.00px;font-size:10.8px;color:#141414;letter-spacing:-0.38px;-webkit-text-stroke:0.18px;">116,0</span>
<span class="t" style="left:581.45px;top:746.00px;font-size:10.8px;color:#141414;letter-spacing:0.371px;-webkit-text-stroke:0.18px;">Andreas Quidding</span>
<span class="t" style="left:581.45px;top:762.00px;font-size:10.8px;color:#141414;letter-spacing:0.452px;-webkit-text-stroke:0.18px;">Testbedriften BM</span>
<span class="t" style="left:721.35px;top:746.00px;font-size:10.8px;color:#141414;letter-spacing:-0.004px;-webkit-text-stroke:0.18px;">12.08.2024 13:19:07</span>
<span class="t" style="left:877.15px;top:746.00px;font-size:10.8px;color:#141414;letter-spacing:0.273px;-webkit-text-stroke:0.18px;">12.08.2024 15:08:00</span>
</body>
</html>
